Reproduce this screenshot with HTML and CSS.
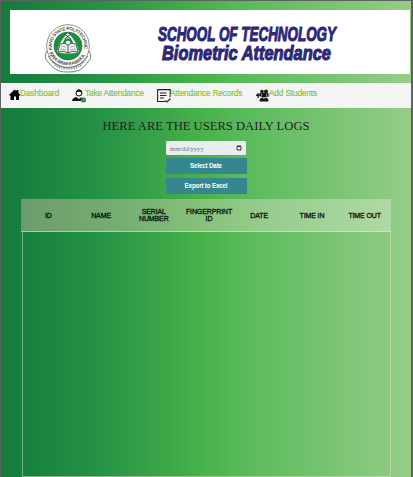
FILE: index.html
```html
<!DOCTYPE html>
<html lang="en">
<head>
<meta charset="utf-8">
<title>Biometric Attendance</title>
<link rel="stylesheet" href="styles.css">
</head>
<body>
<header class="banner">
  <svg class="crest" width="48" height="50" viewBox="0 0 48 50">
    <path d="M3 27Q-1 33 4 38Q12 49 24 48Q37 49 44 38Q49 33 45 27L40 33Q24 48 8 33Z" fill="#fff" stroke="#4d6655" stroke-width=".8"/>
    <path d="M4 32Q10 43 24 43Q38 43 44 32M8 38Q24 50 40 38" fill="none" stroke="#596a5e" stroke-width=".8"/>
    <path d="M10 41Q24 49 38 41" fill="none" stroke="#888" stroke-width="1.2" stroke-dasharray="1.5 1"/>
    <circle cx="24" cy="22" r="21.3" fill="#fff" stroke="#667e6c" stroke-width=".8"/>
    <circle cx="24" cy="22" r="14" fill="#189141" stroke="#315d40" stroke-width=".6"/>
    <path id="ring-top" d="M8.100 26A16.300 16.300 0 1 1 39.900 26" fill="none"/>
    <path id="ring-bottom" d="M4.500 25A19.800 19.800 0 0 0 43.500 25" fill="none"/>
    <text class="ring"><textPath href="#ring-top" textLength="57">KANO STATE POLYTECHNIC</textPath></text>
    <text class="ring"><textPath href="#ring-bottom" startOffset="4" textLength="44">IQRA BISMI RABBIKA</textPath></text>
    <path d="M24 8Q28 13 32.5 20L35 28Q24 31 13 28L15.5 20Q20 13 24 8Z" fill="#fff"/>
    <path d="M20.5 10L27 15M27 10L20.5 15M22 9H26" stroke="#334239" stroke-width="1"/>
    <path d="M20.5 20Q20 15.5 24 15.5T27.5 20" fill="none" stroke="#189141" stroke-width="2.5"/>
    <path d="M16 20Q21 18 24 21Q27 18 32 20L34 28Q28 26 24 29Q20 26 14 28ZM24 21V29" fill="#eee" stroke="#333" stroke-width=".8"/>
    <path d="M17 22L22 23M16 25L22 26M26 23L31 22M26 26L32 25" stroke="#888" stroke-width=".6"/>
  </svg>
  <svg class="title" width="200" height="48" viewBox="0 0 200 48">
    <text x="6" y="21" textLength="178" lengthAdjust="spacingAndGlyphs">SCHOOL OF TECHNOLOGY</text>
    <text x="10" y="40" textLength="169" lengthAdjust="spacingAndGlyphs">Biometric Attendance</text>
  </svg>
</header>
<nav class="nav">
  <a class="home"><svg width="12" height="12" viewBox="0 0 12 12"><path d="M0 6L5.5 .5L7.5 2V1H9.5V4L11.5 6L10 7V11H7V7.500H5V11H1.500V7Z" fill="#080808"/></svg><span>Dashboard</span></a>
  <a class="take"><svg width="14" height="14" viewBox="0 0 14 14"><circle cx="7" cy="4" r="3" fill="#fff" stroke="#111"/><path d="M3.800 4Q4 .5 7 .5T10.200 4Q7 1.500 3.800 4ZM0 12Q.5 8.500 4.500 8L7 10L9 8.200L13 12Z" fill="#111"/><circle cx="11.500" cy="11" r="2.500" fill="#287f3e"/><path d="M10.200 11L11.200 12L13 10" fill="none" stroke="#b7d7bd" stroke-width=".6"/></svg><span>Take Attendance</span></a>
  <a class="records"><svg width="14" height="14" viewBox="0 0 14 14"><path d="M8 12.500H.6V.6H13.200V8M3 4H9.500M3 6.500H9.500M3 9H7M8 11.500L10 13L13.500 9.500" fill="none" stroke="#222" stroke-width="1.100"/></svg><span>Attendance Records</span></a>
  <a class="add"><svg width="13" height="13" viewBox="0 0 13 13"><g fill="#151515"><circle cx="6" cy="2.500" r="1.800"/><circle cx="10" cy="2.500" r="1.900"/><circle cx="8" cy="6" r="2.200"/><path d="M3.500 4H12.500V8H4.500ZM3.500 12.500Q3.500 8 8 8.500Q12.500 8 12.500 12.500ZM1.500 4H2.800V5.500H4.300V7H2.800V9H1.500V7H0V5.500H1.500Z"/></g><path d="M5.800 4.500L5.200 8M10.300 4.500L11 8M7.300 8.500L8 10L8.800 8.500" fill="none" stroke="#eee" stroke-width=".6"/></svg><span>Add Students</span></a>
</nav>
<main>
  <h1><svg width="210" height="18"><text x="1.500" y="12.500" textLength="207" lengthAdjust="spacingAndGlyphs">HERE ARE THE USERS DAILY LOGS</text></svg></h1>
  <form class="controls">
    <div class="date"><span>mm/dd/yyyy</span><svg width="6" height="6" viewBox="0 0 6 6"><path d="M1 1.500H5V5H1ZM1 1H5" fill="none" stroke="#111" stroke-width=".8"/></svg></div>
    <button type="button">Select Date</button>
    <button type="button">Export to Excel</button>
  </form>
  <section class="log">
    <div class="head"><span>ID</span><span>NAME</span><span>SERIAL<br>NUMBER</span><span class="wide">FINGERPRINT<br>ID</span><span>DATE</span><span>TIME IN</span><span>TIME OUT</span></div>
    <div class="rows"></div>
  </section>
</main>
</body>
</html>
```
FILE: styles.css
```css
* { box-sizing: border-box; }
body {
  margin: 0;
  height: 477px;
  overflow: hidden;
  border: solid #5e6260;
  border-width: 1px 2px 0 1px;
  background: linear-gradient(90deg, #147b3d 0, #1b8440 10%, #279346 25%, #4ab349 50%, #56b958 57%, #96cd88 100%);
  font-family: "Liberation Sans", Arial, sans-serif;
}
.banner {
  display: flex;
  width: 400px;
  height: 64px;
  margin: 9px 0 9px 9px;
  background: #fff;
}
.crest { margin: 14px 0 0 34px; }
.ring { font: bold 4.6px "Liberation Sans", sans-serif; fill: #3f4f45; }
.title {
  margin: 10px 0 0 60px;
  overflow: visible;
  font: italic bold 20.5px "Liberation Sans", sans-serif;
  fill: #2c2878;
  stroke: #2c2878;
  stroke-width: 1.1px;
}
.nav {
  display: flex;
  height: 25px;
  padding: 6px 0 0 8px;
  background: #f4f4f4;
  color: #82c52e;
  font-size: 8.3px;
  letter-spacing: -.16px;
  line-height: 9px;
  -webkit-text-stroke: .15px #82c52e;
}
.nav a { display: flex; white-space: nowrap; }
.nav .home { width: 63px; }
.nav .take { width: 85px; }
.nav .records { width: 98px; }
.nav svg { flex: none; }
.nav span { margin-left: -1px; }
.nav .add { padding-left: 1px; }
.nav .add span { margin-left: 0; }
h1 { display: flex; justify-content: center; height: 18px; margin: 9px 0 0; }
h1 svg { overflow: visible; font: 13.5px "Liberation Serif", serif; fill: #251b2b; }
.controls { display: flex; flex-direction: column; align-items: center; }
.date {
  display: flex;
  align-items: center;
  justify-content: space-between;
  width: 80px;
  height: 14px;
  margin: 6px 0 3px;
  padding: 0 4px;
  border-radius: 1px;
  background: #e8edf0;
  color: #69727a;
  font: 6.6px "Liberation Serif", serif;
}
button {
  width: 81px;
  height: 16px;
  margin: 0 0 4px;
  padding: 0 0 1px;
  border: 0;
  background: #35868f;
  color: #fff;
  font: bold 6.3px "Liberation Sans", sans-serif;
  letter-spacing: -.2px;
}
.log { width: 370px; margin: 1px 0 0 20px; }
.head {
  display: grid;
  grid-template-columns: repeat(7, 1fr);
  align-items: center;
  height: 33px;
  padding-left: 1px;
  border-bottom: 1px solid rgba(225, 240, 215, .55);
  background: linear-gradient(90deg, #6c9c6d, #76ae72 28%, #87c37c 50%, #9ace91 70%, #afd9a6);
  color: #0c120d;
  font-size: 7px;
  letter-spacing: -.12px;
  line-height: 7px;
  text-align: center;
  -webkit-text-stroke: .3px #0c120d;
}
.head .wide { padding-left: 5px; }
.rows {
  height: 245px;
  margin-left: 1px;
  border: 1px solid rgba(215, 230, 200, .5);
  border-top: 0;
}
```
